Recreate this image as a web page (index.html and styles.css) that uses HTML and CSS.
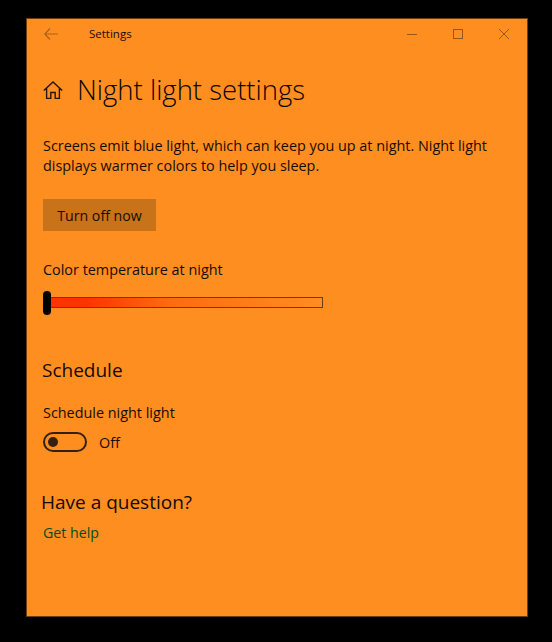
FILE: index.html
```html
<!DOCTYPE html>
<html>
<head>
    <meta charset="UTF-8">
    <title>Settings</title>
    <link rel="stylesheet" href="styles.css">
</head>
<body>
    <div class="window">
        <div class="titlebar">
            <svg class="back-icon" width="14" height="12" viewBox="0 0 14 12"><path d="M6 .5 .8 6 6 11.5M.8 6H14" fill="none" stroke="#a9601f" stroke-width="1.1"/></svg>
            <span class="app-name">Settings</span>
            <div class="controls">
                <svg width="10" height="10" viewBox="0 0 10 10"><path d="M0 5.5H10" stroke="#9a5719" stroke-width="1"/></svg>
                <svg width="10" height="10" viewBox="0 0 10 10"><rect x=".5" y=".5" width="9" height="9" fill="none" stroke="#9a5719" stroke-width="1"/></svg>
                <svg width="10" height="10" viewBox="0 0 10 10"><path d="M0 0 10 10M10 0 0 10" stroke="#9a5719" stroke-width="1"/></svg>
            </div>
        </div>
        <div class="content">
            <div class="page-head">
                <svg width="20" height="18" viewBox="0 0 20 18"><path d="M.8 9.6 10 1l9.2 8.6M3.6 7.2V17.5h4.2v-6h4.4v6h4.2V7.2" fill="none" stroke="#2a1606" stroke-width="1.4"/></svg>
                <h1>Night light settings</h1>
            </div>
            <p class="intro">Screens emit blue light, which can keep you up at night. Night light displays warmer colors to help you sleep.</p>
            <button class="btn">Turn off now</button>
            <div class="field-label temp-label">Color temperature at night</div>
            <div class="slider">
                <div class="slider-track"></div>
                <div class="slider-thumb"></div>
            </div>
            <h2 class="schedule-title">Schedule</h2>
            <div class="field-label">Schedule night light</div>
            <div class="toggle-row">
                <div class="toggle"><span class="toggle-dot"></span></div>
                <span>Off</span>
            </div>
            <h2 class="help-title">Have a question?</h2>
            <a class="help-link">Get help</a>
        </div>
    </div>
</body>
</html>
```

FILE: styles.css
```css
body {
    margin: 0;
    height: 642px;
    overflow: hidden;
    background-color: #000;
    font-family: "Open Sans", "Noto Sans", sans-serif;
    color: #170c02;
}
.window {
    box-sizing: border-box;
    width: 502px;
    height: 599px;
    margin: 18px 0 0 26px;
    background-color: #ff8e21;
    border: 1px solid #6b3d12;
}
.titlebar {
    display: flex;
    align-items: center;
    height: 29px;
    padding-left: 17px;
}
.back-icon {
    margin-right: 31px;
}
.app-name {
    font-size: 11.5px;
}
.controls {
    display: flex;
    gap: 36px;
    margin-left: auto;
    margin-right: 18px;
}
.content {
    padding: 0 16px;
}
.page-head {
    display: flex;
    align-items: center;
    gap: 14px;
    margin-top: 24px;
}
h1 {
    margin: 0;
    font-size: 27.5px;
    font-weight: 300;
    line-height: 36px;
    color: #0a0501;
}
.intro {
    margin: 28px 0 0;
    font-size: 14.4px;
    line-height: 20px;
}
.btn {
    display: block;
    width: 113px;
    height: 32px;
    margin-top: 23px;
    padding: 0;
    border: 0;
    background-color: #c87319;
    font: inherit;
    font-size: 14.2px;
    color: #170c02;
}
.field-label {
    font-size: 14.4px;
    line-height: 20px;
}
.temp-label {
    margin-top: 29px;
}
.slider {
    position: relative;
    width: 280px;
    height: 24px;
    margin-top: 11px;
    display: flex;
    align-items: center;
}
.slider-track {
    box-sizing: border-box;
    width: 280px;
    height: 11px;
    margin-bottom: 2px;
    border: 1px solid #6b3d12;
    background: linear-gradient(to right, #ff3300 0%, #ff3300 15%, #ff6a10 45%, #ff8e21 100%);
}
.slider-thumb {
    position: absolute;
    left: 0;
    top: 0;
    width: 8px;
    height: 24px;
    border-radius: 4px;
    background-color: #000;
}
h2 {
    margin: 0;
    font-size: 19px;
    font-weight: 400;
    line-height: 26px;
    color: #140a02;
}
.schedule-title {
    margin-top: 42px;
    margin-left: -1px;
}
.schedule-title + .field-label {
    margin-top: 20px;
}
.toggle-row {
    display: flex;
    align-items: center;
    gap: 12px;
    margin-top: 9px;
    font-size: 14.4px;
}
.toggle {
    box-sizing: border-box;
    display: flex;
    align-items: center;
    width: 44px;
    height: 20px;
    padding-left: 3px;
    border: 2px solid #33200e;
    border-radius: 10px;
}
.toggle-dot {
    width: 10px;
    height: 10px;
    border-radius: 50%;
    background-color: #33200e;
}
.help-title {
    margin-top: 37px;
    margin-left: -2px;
}
.help-link {
    display: block;
    margin-top: 8px;
    font-size: 14.2px;
    line-height: 20px;
    color: #004d1a;
}
```
